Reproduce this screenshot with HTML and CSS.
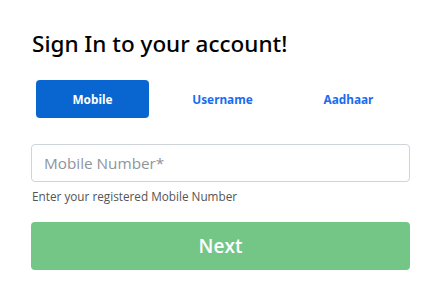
FILE: index.html
```html
<!DOCTYPE html>
<html lang="en">
<head>
<meta charset="utf-8">
<title>Sign In</title>
<link rel="stylesheet" href="styles.css">
</head>
<body>
<main class="card">
  <h1 class="title">Sign In to your account!</h1>
  <nav class="tabs">
    <a class="tab tab-active" href="#">Mobile</a>
    <a class="tab tab-mid" href="#">Username</a>
    <a class="tab tab-last" href="#">Aadhaar</a>
  </nav>
  <form class="form">
    <input class="field" type="text" placeholder="Mobile Number*">
    <p class="hint">Enter your registered Mobile Number</p>
    <button class="next" type="button">Next</button>
  </form>
</main>
</body>
</html>
```
FILE: styles.css
```css
* { box-sizing: border-box; }
html, body { margin: 0; padding: 0; background: #fff; }
body { font-family: "Open Sans", "Noto Sans", sans-serif; color: #000; }
.card { width: 423px; padding: 26px 13px 0 31px; }
.title { margin: 0 0 0 1px; font-family: "Noto Sans", "Open Sans", sans-serif; font-size: 22.5px; font-weight: 500; line-height: 36px; color: #000; letter-spacing: 0; }
.tabs { display: flex; margin-top: 18px; padding-left: 5px; }
.tab { display: flex; align-items: center; justify-content: center; height: 38px; border-radius: 4px; font-family: "Noto Sans", sans-serif; font-weight: 700; font-size: 11.8px; text-decoration: none; color: #1a6cf0; }
.tab-active { width: 113px; background: #0966d0; color: #fff; }
.tab-mid { width: 147px; }
.tab-last { width: 89px; margin-left: 8px; }
.form { margin-top: 26px; }
.field { display: block; width: 379px; height: 38px; border: 1px solid #ced4da; border-radius: 4px; padding: 0 12px; font-family: "Open Sans", sans-serif; font-size: 15.3px; color: #333; outline: none; }
.field::placeholder { color: #8e959c; }
.hint { margin: 6px 0 0 1px; font-size: 11.75px; line-height: 16px; color: #555; }
.next { display: block; margin-top: 18px; width: 379px; height: 48px; border: 0; border-radius: 4px; background: #74c687; color: #fff; font-family: "Open Sans", sans-serif; font-size: 19px; font-weight: 600; }
```
